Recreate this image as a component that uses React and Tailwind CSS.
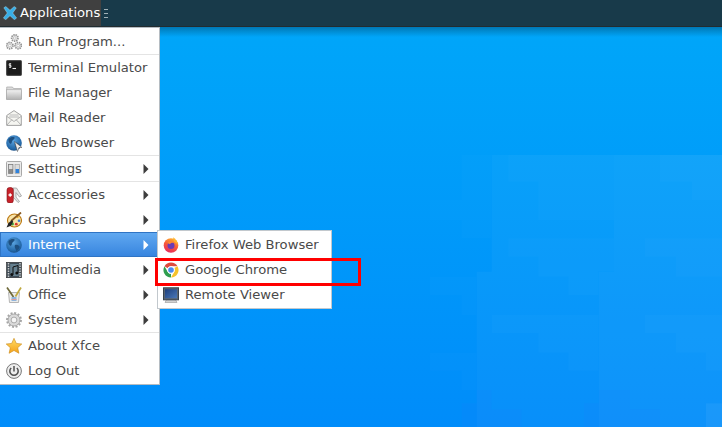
const sans = "font-['DejaVu_Sans',sans-serif]";

function Sep() {
  return <div className="h-px bg-[#e4e4e4]" />;
}

function Row({ icon, label, arrow, active, sub }) {
  return (
    <div className={`flex h-[25px] items-center text-[13.15px] ${sub ? "pl-[5px]" : "pl-[6px]"} ${active ? "bg-gradient-to-b from-[#62aaf1] to-[#3583de] text-white shadow-[inset_0_0_0_1px_#2f74c4]" : "text-[#4a4a4a]"}`}>
      <span className="flex h-4 w-4 shrink-0 items-center justify-center">{icon}</span>
      <span className="ml-[6px] flex-1 truncate">{label}</span>
      {arrow && (
        <svg width="6" height="10" viewBox="0 0 6 10" className="mr-[10px] shrink-0">
          <path d="M0.5 0 L5.5 5 L0.5 10 Z" fill={active ? "#ffffff" : "#3d3d3d"} />
        </svg>
      )}
    </div>
  );
}

const Gear = ({ x, y, r }) => (
  <g>
    <circle cx={x} cy={y} r={r} fill="#ececec" stroke="#959595" strokeWidth="1.7" strokeDasharray="1.4 0.8" />
    <circle cx={x} cy={y} r={r * 0.42} fill="#fbfbfb" stroke="#a8a8a8" strokeWidth="0.6" />
  </g>
);

const RunIcon = () => (
  <svg width="16" height="16" viewBox="0 0 16 16">
    <Gear x={8.8} y={4} r={3.2} />
    <Gear x={3.8} y={11.6} r={3.2} />
    <Gear x={12.2} y={11.6} r={3.2} />
  </svg>
);
const TerminalIcon = () => (
  <svg width="16" height="16" viewBox="0 0 16 16">
    <rect x="0.5" y="0.5" width="15" height="15" rx="1" fill="#1c1c1c" stroke="#5c5c5c" />
    <rect x="1" y="1" width="14" height="14" fill="none" stroke="#333" strokeWidth="0.6" />
    <path d="M5.2 3.800H3.200V5.500H5V7.200H3M4.100 3v5" stroke="#f2f2f2" strokeWidth="0.8" fill="none" />
    <path d="M6.500 8.500h3.500" stroke="#f2f2f2" strokeWidth="1.100" />
  </svg>
);
const FolderIcon = () => (
  <svg width="16" height="16" viewBox="0 0 16 16">
    <defs>
      <linearGradient id="fold" x1="0" y1="0" x2="0" y2="1">
        <stop offset="0" stopColor="#f2f2f2" />
        <stop offset="1" stopColor="#b2b2b2" />
      </linearGradient>
    </defs>
    <path d="M0.700 2h5.800l1 1.500h7.800v10.500H.7z" fill="#dcdcdc" stroke="#a6a6a6" strokeWidth="0.7" />
    <rect x="0.600" y="4.800" width="14.800" height="9.700" fill="url(#fold)" stroke="#a2a2a2" strokeWidth="0.6" />
  </svg>
);
const MailIcon = () => (
  <svg width="16" height="16" viewBox="0 0 16 16">
    <path d="M0.700 5.500L8 0.600l7.300 4.900v9.900H.7z" fill="#f5f5f1" stroke="#999" strokeWidth="0.9" />
    <path d="M3.500 5h9M3 7h10" stroke="#b5b5b5" strokeWidth="0.9" />
    <path d="M1 6.500L8 11.500l7-5M1 15l5-5.500M15 15l-5-5.500" stroke="#a4a4a4" strokeWidth="0.8" fill="none" />
  </svg>
);
const Globe = ({ id }) => (
  <svg width="16" height="16" viewBox="0 0 16 16">
    <defs>
      <radialGradient id={id} cx="0.45" cy="0.35" r="0.75">
        <stop offset="0" stopColor="#5aa3df" />
        <stop offset="0.7" stopColor="#2368a8" />
        <stop offset="1" stopColor="#173f6b" />
      </radialGradient>
    </defs>
    <circle cx="8" cy="8" r="7.8" fill={`url(#${id})`} />
    <path d="M2.500 4c2-2 4-2.200 6-1.700.6 1.500-1 2.200-2 3.200s-.4 2.500-1.500 3.200S2 6.500 2.500 4zM9 8c1.500-.5 3.800 0 4.500 1.500S12 13 10.500 14c-.5-1.500-2.500-4-1.500-6z" fill="#1d4f80" />
  </svg>
);
const WebIcon = () => (
  <div className="relative h-4 w-4">
    <Globe id="g1" />
    <svg width="9" height="11" viewBox="0 0 9 11" className="absolute left-[8px] top-[6px]">
      <path d="M0.500 0.500L8 6.500H5L3.500 10.500z" fill="#ececec" stroke="#555" strokeWidth="0.6" />
    </svg>
  </div>
);
const SettingsIcon = () => (
  <svg width="16" height="16" viewBox="0 0 16 16">
    <rect x="0.500" y="0.500" width="15" height="15" rx="1" fill="#ebebeb" stroke="#a8a8a8" />
    <rect x="2.500" y="3.500" width="4.500" height="9" fill="#8a8a8a" stroke="#666" strokeWidth="0.5" />
    <rect x="3" y="4" width="3.500" height="4" fill="#dedede" />
    <rect x="9" y="3.500" width="4.500" height="9" fill="#dcdcdc" stroke="#888" strokeWidth="0.5" />
    <rect x="9.500" y="8" width="3.500" height="4" fill="#2f82dc" />
  </svg>
);
const AccessoriesIcon = () => (
  <svg width="16" height="16" viewBox="0 0 16 16">
    <path d="M7 1h3.500l5 8-2 1L10 5.500V10l3.500 4.500-1.500 1L7 10z" fill="#e4e4e4" stroke="#949494" strokeWidth="0.7" />
    <rect x="1" y="0.500" width="6.300" height="15.500" rx="2.500" fill="#c8222a" stroke="#7c1014" strokeWidth="0.6" />
    <path d="M4.200 6.300v3.400M2.500 8h3.400" stroke="#fff" strokeWidth="1.300" />
  </svg>
);
const GraphicsIcon = () => (
  <svg width="16" height="16" viewBox="0 0 16 16">
    <ellipse cx="8.500" cy="8.500" rx="7" ry="6.500" fill="#f8e4a8" stroke="#bb7710" strokeWidth="1.100" />
    <circle cx="6.500" cy="12" r="1.400" fill="#38a03a" />
    <circle cx="10.300" cy="12.200" r="1.400" fill="#d8362f" />
    <circle cx="13" cy="8.800" r="1.300" fill="#3a7bd0" />
    <circle cx="11.500" cy="4.800" r="1.200" fill="#e0a020" />
    <path d="M15 0.500L5 9" stroke="#8a5a20" strokeWidth="1.700" />
    <path d="M6 8L2.500 11 .5 15.500l4.500-1.700 2.200-4z" fill="#242424" />
  </svg>
);
const MultimediaIcon = () => (
  <svg width="16" height="16" viewBox="0 0 16 16">
    <rect x="0.500" y="0.300" width="15" height="15.400" fill="#3e4c57" stroke="#2c2c2c" strokeWidth="0.6" />
    <path d="M2.500 1v14M14 1v14" stroke="#c8c8c8" strokeWidth="1.500" strokeDasharray="1.500 1" />
    <rect x="4.200" y="2" width="8.500" height="12" fill="#66808f" />
    <path d="M7 12.500V5l5-1.500V11" stroke="#0f0f0f" strokeWidth="1" fill="none" />
    <circle cx="5.800" cy="12.500" r="1.500" fill="#0f0f0f" />
    <circle cx="10.800" cy="11" r="1.500" fill="#0f0f0f" />
  </svg>
);
const OfficeIcon = () => (
  <svg width="16" height="16" viewBox="0 0 16 16">
    <path d="M2.500 5.500h11l-1 10h-9z" fill="#ececea" stroke="#9a9a9a" strokeWidth="0.7" />
    <path d="M1 0.500L7.500 10" stroke="#6f6a3a" strokeWidth="1.700" />
    <path d="M15 0.500L9.500 9.500" stroke="#c0a93f" strokeWidth="1.700" />
    <rect x="5.500" y="10" width="5" height="4" fill="#8fb4dc" />
    <path d="M5.500 12.500h5" stroke="#dd9c9c" strokeWidth="1" />
  </svg>
);
const SystemIcon = () => (
  <svg width="16" height="16" viewBox="0 0 16 16">
    <circle cx="8" cy="8" r="6" fill="#d9d9d9" stroke="#9b9b9b" strokeWidth="0.8" />
    <circle cx="8" cy="8" r="7" fill="none" stroke="#a6a6a6" strokeWidth="1.900" strokeDasharray="2 1.660" />
    <circle cx="8" cy="8" r="2.900" fill="#f5f5f5" stroke="#9a9a9a" strokeWidth="0.8" />
  </svg>
);
const StarIcon = () => (
  <svg width="16" height="16" viewBox="0 0 16 16">
    <defs>
      <linearGradient id="star" x1="0" y1="0" x2="0" y2="1">
        <stop offset="0" stopColor="#ffdd66" />
        <stop offset="1" stopColor="#f5a11a" />
      </linearGradient>
    </defs>
    <path d="M8 0.300l2.300 5.100 5.500.6-4.100 3.700 1.200 5.600L8 12.500 3.100 15.300l1.200-5.600L.2 6l5.500-.6z" fill="url(#star)" stroke="#c98a1a" strokeWidth="0.6" />
  </svg>
);
const LogoutIcon = () => (
  <svg width="16" height="16" viewBox="0 0 16 16">
    <circle cx="8" cy="8" r="7.400" fill="#eeeeee" stroke="#6a6a6a" strokeWidth="0.9" />
    <path d="M5.200 5a4.200 4.200 0 1 0 5.600 0" fill="none" stroke="#505050" strokeWidth="1.500" />
    <path d="M8 3v5.500" stroke="#505050" strokeWidth="1.500" />
  </svg>
);
const FirefoxIcon = () => (
  <svg width="16" height="16" viewBox="0 0 16 16">
    <defs>
      <linearGradient id="ff" x1="0.7" y1="0" x2="0.3" y2="1">
        <stop offset="0" stopColor="#ffb52e" />
        <stop offset="0.5" stopColor="#f7583a" />
        <stop offset="1" stopColor="#e42a5e" />
      </linearGradient>
    </defs>
    <circle cx="8" cy="8.500" r="7.300" fill="url(#ff)" />
    <path d="M10 0.200c2.500 1.500 4.300 4 5 7l-4-2.700z" fill="#ffb52e" />
    <circle cx="8" cy="8.500" r="3.500" fill="#6b3bb5" />
    <path d="M4.500 6c1.500-2 5-2 6.500 0-1.500-.5-3.300-.2-4 1.200z" fill="#ff8a30" />
  </svg>
);
const ChromeIcon = () => (
  <svg width="16" height="16" viewBox="0 0 16 16">
    <path d="M8 0.500a7.500 7.500 0 0 1 6.500 3.750H8a3.750 3.750 0 0 0-3.250 1.900L1.500 4.250A7.500 7.500 0 0 1 8 0.500z" fill="#dd4b3e" />
    <path d="M14.500 4.250A7.500 7.500 0 0 1 8 15.500l3.250-5.600A3.750 3.750 0 0 0 11.250 6.100z" fill="#f6c32d" />
    <path d="M8 15.500A7.500 7.500 0 0 1 1.500 4.250l3.250 5.650A3.750 3.750 0 0 0 8 11.750z" fill="#2f9e4f" />
    <circle cx="8" cy="8" r="3.700" fill="#fff" />
    <circle cx="8" cy="8" r="2.800" fill="#4c8bf0" />
  </svg>
);
const RemoteIcon = () => (
  <svg width="16" height="16" viewBox="0 0 16 16">
    <defs>
      <linearGradient id="scr" x1="0" y1="0" x2="1" y2="1">
        <stop offset="0" stopColor="#1e3f7c" />
        <stop offset="1" stopColor="#4a78b8" />
      </linearGradient>
    </defs>
    <path d="M3.500 12.500l-1.500 3h12l-1.500-3z" fill="#d2d2d2" stroke="#8a8a8a" strokeWidth="0.5" />
    <rect x="0.500" y="0.800" width="15" height="12" fill="#5a6672" stroke="#39424c" />
    <rect x="2" y="2.200" width="12" height="9" fill="url(#scr)" />
  </svg>
);

const Wallpaper = () => (
  <svg width="362" height="427" viewBox="0 0 1086 1281" className="absolute left-[360px] top-[-27px]">
    <g fill="#ffffff">
      <path fillOpacity="0.012" d="M305 465H395V715H305V660H210V600H305zM210 830H350V945H305V885H210zM210 1058H350V1170H305V1112H210z" />
      <path fillOpacity="0.03" d="M395 465H762V815H716V1281H350V815H395z" />
      <path fillOpacity="0.055" d="M762 465H1086V1281H716V815H762z" />
      <path fillOpacity="0.018" d="M445 465H762V660H535V600H535V545H445zM445 715H762V815H716V885H625V830H535V770H445zM395 945H716V1112H625V1058H535V1000H395z" />
      <path fillOpacity="0.02" d="M900 465H1086V600H995V545H900zM855 715H1086V830H948V770H855zM855 945H1086V1112H1038V1058H948V1000H855z" />
    </g>
    <path fill="#1e7cff" fillOpacity="0.12" d="M305 1210H350V1170H395V1228H485V1281H305zM672 1210H716V1170H810V1228H900V1281H672z" />
    <path fill="#ffffff" fillOpacity="0.05" d="M1038 1210H1086V1281H1038z" />
  </svg>
);

export default function App() {
  return (
    <div className={`flex h-[427px] w-[722px] flex-col overflow-hidden ${sans}`}>
      <header className="z-20 flex h-[27px] shrink-0 items-stretch border-b border-[#222c30] bg-[#183a4a]">
        <div className="flex h-[26px] w-[101px] items-center bg-[#404040] pl-[3px] text-[13.15px] text-white">
          <svg width="14" height="14" viewBox="0 0 14 14" className="shrink-0">
            <path d="M0.800 1.800L2.800 0.500 7 4.300 11.200 0.500 13.300 1.900 9.700 7 13.600 12 11.400 13.700 7 9.700 2.700 13.700 .4 12 4.300 7z" fill="#38aee6" stroke="#bfe8f8" strokeWidth="0.4" />
          </svg>
          <span className="ml-[3px]">Applications</span>
        </div>
        <div className="ml-[3px] flex h-[26px] flex-col justify-center gap-[3px]">
          <span className="h-px w-[4px] bg-[#9fb0b6]" />
          <span className="h-px w-[4px] bg-[#9fb0b6]" />
          <span className="h-px w-[4px] bg-[#9fb0b6]" />
        </div>
      </header>
      <main className="relative flex-1 bg-gradient-to-b from-[#00a6f9] to-[#008cfa]">
        <div className="absolute inset-x-0 top-0 h-[10px] bg-gradient-to-b from-[#0078b4] to-transparent" />
        <Wallpaper />
        <div className="absolute left-0 top-0 w-[160px] border border-l-0 border-[#b5bcc2] bg-white py-px">
          <Row icon={<RunIcon />} label="Run Program..." />
          <Sep />
          <Row icon={<TerminalIcon />} label="Terminal Emulator" />
          <Row icon={<FolderIcon />} label="File Manager" />
          <Row icon={<MailIcon />} label="Mail Reader" />
          <Row icon={<WebIcon />} label="Web Browser" />
          <Sep />
          <Row icon={<SettingsIcon />} label="Settings" arrow />
          <Sep />
          <Row icon={<AccessoriesIcon />} label="Accessories" arrow />
          <Row icon={<GraphicsIcon />} label="Graphics" arrow />
          <Row icon={<Globe id="g2" />} label="Internet" arrow active />
          <Row icon={<MultimediaIcon />} label="Multimedia" arrow />
          <Row icon={<OfficeIcon />} label="Office" arrow />
          <Row icon={<SystemIcon />} label="System" arrow />
          <Sep />
          <Row icon={<StarIcon />} label="About Xfce" />
          <Row icon={<LogoutIcon />} label="Log Out" />
        </div>
        <div className="absolute left-[157px] top-[203px] w-[175px] border border-[#c2c8cd] bg-white py-px">
          <Row sub icon={<FirefoxIcon />} label="Firefox Web Browser" />
          <Row sub icon={<ChromeIcon />} label="Google Chrome" />
          <Row sub icon={<RemoteIcon />} label="Remote Viewer" />
        </div>
        <div className="absolute left-[155px] top-[231px] h-[28px] w-[206px] border-[3px] border-[#ff0000]" />
      </main>
    </div>
  );
}
